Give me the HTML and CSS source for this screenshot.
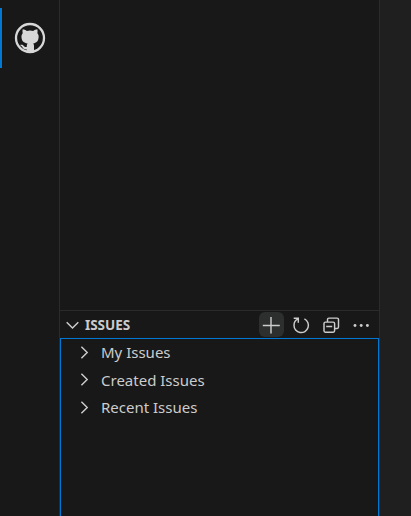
FILE: index.html
```html
<!DOCTYPE html>
<html lang="en">
<head>
<meta charset="utf-8">
<title>Issues</title>
<link rel="stylesheet" href="styles.css">
</head>
<body>
<div class="workbench">
  <nav class="activity-bar">
    <div class="activity active">
      <svg class="github" viewBox="0 0 32 32">
        <circle cx="16" cy="16" r="14" fill="none" stroke="currentColor" stroke-width="2.3"/>
        <path fill="currentColor" d="M8.7 7.2C10.1 7.2 11.6 8 12.8 8.9Q16 8.3 19.2 8.9C20.4 8 21.9 7.2 23.3 7.2Q24 9.4 23.4 11.2C24.5 12.4 24.8 13.8 24.6 15.6C24.3 19.5 22.3 21 19.2 21.5Q20 22.3 20 23.8V30.5H12.6V27.3C10.3 27.7 9.1 26.6 8.3 25.1C7.8 24.2 7 23.8 6 23.1C7.8 22.3 9.1 23 9.8 24C10.6 25.2 11.3 25.3 12.7 24.9Q12.7 22.4 13.6 21.5C10 21 7.8 19.5 7.5 15.6C7.3 13.8 7.7 12.4 8.7 11.2Q8.1 9.4 8.7 7.2Z"/>
      </svg>
    </div>
  </nav>
  <aside class="sidebar">
    <div class="upper-pane"></div>
    <header class="pane-header">
      <svg class="icon chevron" viewBox="0 0 16 16"><path d="M1.7 5.2 7.5 11l5.8-5.8"/></svg>
      <h2>ISSUES</h2>
      <div class="actions">
        <button class="action hovered" aria-label="Create issue"><svg class="icon plus" viewBox="0 0 20 20"><path d="M10 2v16.5M1.8 10.5h17"/></svg></button>
        <button class="action" aria-label="Refresh"><svg class="icon" viewBox="0 0 20 20"><path d="M2.7 3.2h4.6v4.6M7 3.8C4.4 5 3 7.3 3 10.2a7.2 7.2 0 1 0 10.4-6.3"/></svg></button>
        <button class="action" aria-label="Collapse all"><svg class="icon" viewBox="0 0 20 20"><path d="M6.5 6.4V4.5q0-1.4 1.4-1.4h8.2q1.4 0 1.4 1.4v7.6q0 1.4-1.4 1.4h-2.5M4.4 7.1h7.8q1.4 0 1.4 1.4v7.3q0 1.4-1.4 1.4H4.4q-1.4 0-1.4-1.4V8.5q0-1.4 1.4-1.4ZM5.2 11.5h6"/></svg></button>
        <button class="action" aria-label="More actions"><svg class="icon dots" viewBox="0 0 20 20"><circle cx="4" cy="10.5" r="1.45"/><circle cx="10.2" cy="10.5" r="1.45"/><circle cx="16.4" cy="10.5" r="1.45"/></svg></button>
      </div>
    </header>
    <ul class="tree">
      <li><svg class="icon twistie" viewBox="0 0 16 16"><path d="m5.4 1.8 5.8 5.7-5.8 5.7"/></svg><span>My Issues</span></li>
      <li><svg class="icon twistie" viewBox="0 0 16 16"><path d="m5.4 1.8 5.8 5.7-5.8 5.7"/></svg><span>Created Issues</span></li>
      <li><svg class="icon twistie" viewBox="0 0 16 16"><path d="m5.4 1.8 5.8 5.7-5.8 5.7"/></svg><span>Recent Issues</span></li>
    </ul>
  </aside>
  <main class="editor"></main>
</div>
</body>
</html>
```
FILE: styles.css
```css
* { box-sizing: border-box; }
body {
  margin: 0;
  background: #181818;
  color: #cccccc;
  font-family: "Noto Sans", "Open Sans", sans-serif;
}
.workbench { display: flex; height: 516px; overflow: hidden; }
.activity-bar { width: 60px; border-right: 1px solid #2b2b2b; padding-top: 8px; }
.activity {
  display: flex;
  align-items: center;
  height: 60px;
  padding-left: 12px;
  border-left: 2px solid #0078d4;
}
.github { width: 32px; height: 32px; color: #d7d7d7; }
.sidebar { display: flex; flex-direction: column; width: 320px; border-right: 1px solid #2b2b2b; }
.upper-pane { height: 310px; flex: none; }
.pane-header {
  display: flex;
  align-items: center;
  flex: none;
  height: 28px;
  padding: 0 5px 0 4px;
  border-top: 1px solid #2b2b2b;
}
.icon { display: block; width: 20px; height: 20px; fill: none; stroke: #cccccc; stroke-width: 1.45; }
.chevron, .twistie { width: 16px; height: 16px; }
.chevron { margin-left: 1px; }
h2 { margin: 0 auto 0 4px; font-size: 13.5px; line-height: 24px; font-weight: 700; letter-spacing: -0.05px; }
.actions { display: flex; gap: 5px; }
.action { width: 25px; height: 25px; padding: 2px; border: 0; border-radius: 6px; background: none; }
.hovered { background: #2d2e2e; }
.dots { fill: #cccccc; stroke: none; }
.tree { flex: 1; margin: 0 0 -2px; padding: 0; list-style: none; border: 1px solid #0078d4; }
.tree li { display: flex; align-items: center; height: 27.5px; padding-left: 15px; font-size: 15px; line-height: 27px; }
.tree span { margin-left: 9px; white-space: nowrap; }
.editor { flex: 1; background: #1f1f1f; }
```
